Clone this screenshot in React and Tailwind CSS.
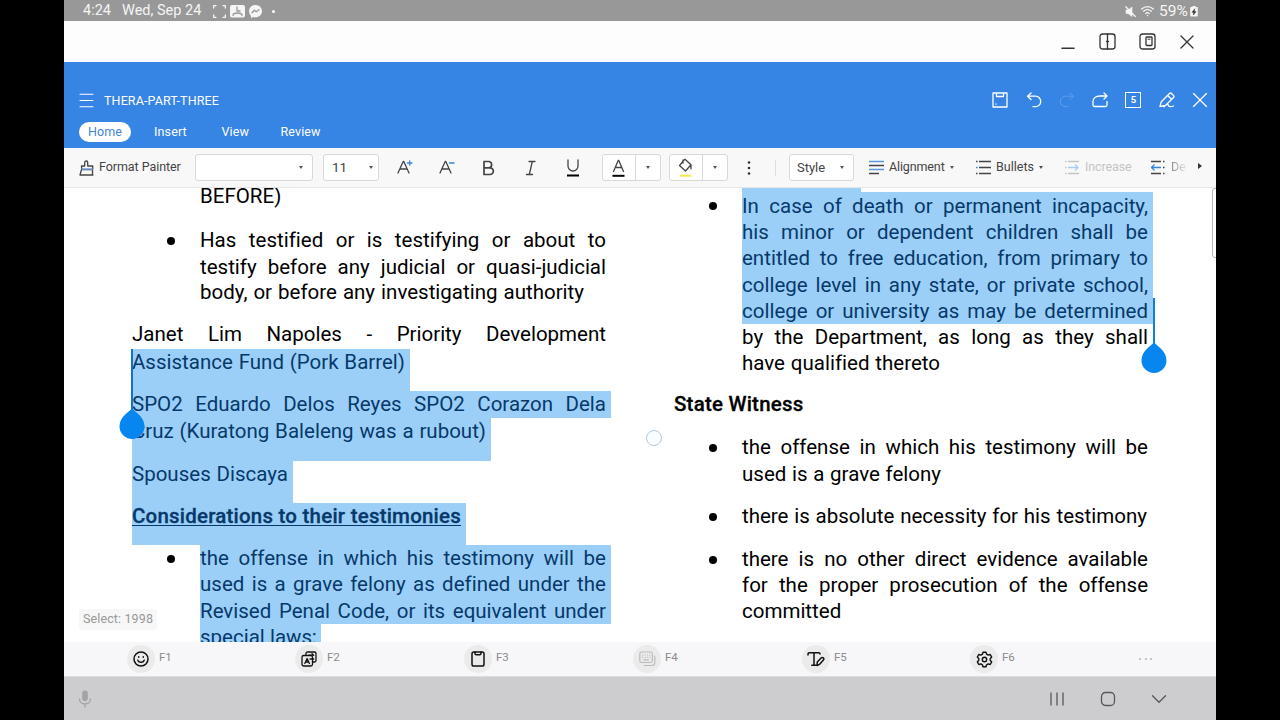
import clsx from "clsx";

const leftLines = [
  { text: "BEFORE)", indent: true, h: "h-11", w: "w-[82px]" },
  { text: "Has testified or is testifying or about to", indent: true, bullet: true, h: "h-[27px]", w: "w-[406px]" },
  { text: "testify before any judicial or quasi-judicial", indent: true, h: "h-[25px]", w: "w-[406px]" },
  { text: "body, or before any investigating authority", indent: true, h: "h-[42px]", w: "w-[384px]" },
  { text: "Janet Lim Napoles - Priority Development", h: "h-[28px]", w: "w-[474px]" },
  { text: "Assistance Fund (Pork Barrel)", h: "h-[42px]", w: "w-[273px]", mark: true },
  { text: "SPO2 Eduardo Delos Reyes SPO2 Corazon Dela", h: "h-[27px]", w: "w-[474px]", mark: true },
  { text: "Cruz (Kuratong Baleleng was a rubout)", h: "h-[43px]", w: "w-[354px]", mark: true },
  { text: "Spouses Discaya", h: "h-[42px]", w: "w-[156px]", mark: true },
  { text: "Considerations to their testimonies", h: "h-[42px]", w: "w-[329px]", mark: true, bold: true, underline: true },
  { text: "the offense in which his testimony will be", indent: true, bullet: true, h: "h-[26px]", w: "w-[406px]", mark: true },
  { text: "used is a grave felony as defined under the", indent: true, h: "h-[27px]", w: "w-[406px]", mark: true },
  { text: "Revised Penal Code, or its equivalent under", indent: true, h: "h-[26px]", w: "w-[406px]", mark: true },
  { text: "special laws;", indent: true, h: "h-[42px]", w: "w-[116px]", mark: true },
];

const rightLines = [
  { text: "In case of death or permanent incapacity,", indent: true, bullet: true, h: "h-[27px] pt-px", w: "w-[406px]", mark: true },
  { text: "his minor or dependent children shall be", indent: true, h: "h-[26px]", w: "w-[406px]", mark: true },
  { text: "entitled to free education, from primary to", indent: true, h: "h-[27px]", w: "w-[406px]", mark: true },
  { text: "college level in any state, or private school,", indent: true, h: "h-[26px]", w: "w-[406px]", mark: true },
  { text: "college or university as may be determined", indent: true, h: "h-[26px]", w: "w-[406px]", mark: true },
  { text: "by the Department, as long as they shall", indent: true, h: "h-[26px]", w: "w-[406px]" },
  { text: "have qualified thereto", indent: true, h: "h-[41px]", w: "w-[198px]" },
  { text: "State Witness", h: "h-[43px]", w: "w-[129px]", bold: true },
  { text: "the offense in which his testimony will be", indent: true, bullet: true, h: "h-[27px]", w: "w-[406px]" },
  { text: "used is a grave felony", indent: true, h: "h-[42px]", w: "w-[199px]" },
  { text: "there is absolute necessity for his testimony", indent: true, bullet: true, h: "h-[43px]", w: "w-[405px]" },
  { text: "there is no other direct evidence available", indent: true, bullet: true, h: "h-[26px]", w: "w-[406px]" },
  { text: "for the proper prosecution of the offense", indent: true, h: "h-[26px]", w: "w-[406px]" },
  { text: "committed", indent: true, h: "h-[26px]", w: "w-[100px]" },
];

const Line = ({ line }) => (
  <div className="flex shrink-0">
    {line.indent && (
      <div className="w-[68px] shrink-0 pt-[9.500px] pl-[34.500px]">
        {line.bullet && <div className="size-2 rounded-full bg-black" />}
      </div>
    )}
    <div className={clsx(line.h, "shrink-0", line.mark ? "bg-[#9ccff8] pr-[5px] text-[#06396a]" : "text-black")}>
      <div
        className={clsx(
          line.w,
          "text-[20.5px] leading-[26px] whitespace-nowrap [font-variant-ligatures:none] [text-align-last:justify]",
          line.bold && "font-medium tracking-[0.01em]",
          line.bold && "[-webkit-text-stroke:0.3px_currentColor]",
          line.underline && "underline underline-offset-2 decoration-1"
        )}
      >
        {line.text}
      </div>
    </div>
  </div>
);

const Svg = ({ className, children, ...rest }) => (
  <svg
    className={clsx("shrink-0", className)}
    fill="none"
    stroke="currentColor"
    strokeWidth="1.3"
    strokeLinecap="round"
    strokeLinejoin="round"
    {...rest}
  >
    {children}
  </svg>
);

const Caret = () => <div className="border-x-[2.5px] border-t-[3px] border-x-transparent border-t-[#555]" />;

const StatusBar = () => (
  <div className="flex h-[21px] shrink-0 items-center bg-[#989898] pt-px pl-[19px] text-[14.5px] leading-[20px] text-[#f5f5f5]">
    <span className="w-[39px] whitespace-nowrap">4:24</span>
    <span className="w-[91px] whitespace-nowrap">Wed, Sep 24</span>
    <Svg className="size-[13px]" viewBox="0 0 13 13">
      <path d="M.7 3V.7H3M10 .7h2.3V3M12.3 10v2.3H10M3 12.3H.7V10" />
    </Svg>
    <Svg className="ml-[4px] h-[13px] w-[15px]" viewBox="0 0 15 13" stroke="none">
      <rect width="15" height="12.5" rx="2" fill="#f5f5f5" />
      <path d="M7 2v4h3M3 10.5c0-2 2-2.5 4.500-2.500s4.500.5 4.500 2.500" stroke="#989898" strokeWidth="1.300" />
    </Svg>
    <Svg className="ml-[4px] size-[13px]" viewBox="0 0 13 13" stroke="none">
      <path d="M6.500 0C2.800 0 0 2.700 0 6.200c0 1.900.8 3.500 2 4.600V13l2.200-1.100c.7.2 1.500.3 2.300.3 3.700 0 6.500-2.600 6.500-6S10.200 0 6.500 0z" fill="#f5f5f5" />
      <path d="M3 7.800l2.300-2.500 2 1.500L10 4.800" stroke="#989898" strokeWidth="1.300" />
    </Svg>
    <span className="ml-[10px] size-[3px] rounded-full bg-white" />
    <Svg className="ml-[850px] h-[11px] w-[11px]" viewBox="0 0 11 11">
      <path d="M1 4v3.500h2L7 10.500V1L3.500 4z" fill="#f5f5f5" strokeWidth=".6" />
      <path d="M.8.8l9.500 9.700" />
    </Svg>
    <Svg className="ml-[5px] h-3 w-[13px]" viewBox="0 0 13 12">
      <path d="M.7 4C4 .8 9 .8 12.300 4M2.700 6.300c2-2.200 5.400-2.200 7.600 0M4.800 8.500c1-1 2.300-1 3.300 0M6.500 10.500v.2" />
    </Svg>
    <span className="ml-[5px] w-[30px] text-[15.500px] whitespace-nowrap">59%</span>
    <Svg className="ml-[1px] h-[11px] w-[8px]" viewBox="0 0 8 11" stroke="none">
      <path d="M2.500 0h3v1H7q.8 0 .8.8v8q0 .8-.8.8H1q-.8 0-.8-.8v-8Q.2 1 1 1h1.500z" fill="#f5f5f5" />
      <path d="M4.600 3L2 6.300h1.700L3.400 9 6 5.600H4.300z" fill="#333" stroke="#333" strokeWidth=".5" />
    </Svg>
  </div>
);

const WindowBar = () => (
  <div className="flex h-[41px] shrink-0 items-center justify-end gap-[23px] bg-[#fdfdfd] pr-[21px] text-[#333]">
    <Svg className="size-4" viewBox="0 0 16 16" strokeWidth="1.500">
      <path d="M2 14.300h12" />
    </Svg>
    <Svg className="size-[17px]" viewBox="0 0 17 17">
      <rect x="1" y="1" width="15" height="15" rx="2.500" />
      <path d="M8.500 1v15M7.500 8.500h2" />
    </Svg>
    <Svg className="size-[17px]" viewBox="0 0 17 17">
      <rect x="1" y="1" width="15" height="15" rx="2.500" />
      <rect x="7" y="4" width="6" height="8.500" rx=".8" />
      <path d="M9 6.200h2" strokeWidth="1" />
    </Svg>
    <Svg className="size-4" viewBox="0 0 16 16">
      <path d="M2 2l12 12M14 2L2 14" />
    </Svg>
  </div>
);

const AppHeader = () => (
  <div className="flex h-[86px] shrink-0 flex-col bg-[#3684e4] pt-[27px] text-white">
    <div className="flex h-6 items-center pl-[15px]">
      <Svg className="mb-[2px] h-[15px] w-[15px]" viewBox="0 0 15 15">
        <path d="M1 1.200h13M1 7.500h13M1 13.800h13" strokeWidth="1.100" />
      </Svg>
      <span className="ml-[10px] text-[12.500px] tracking-[0.01em]">THERA-PART-THREE</span>
      <div className="ml-auto flex items-center gap-[17.300px] pr-[8px] pb-[3px]">
        <Svg className="size-4" viewBox="0 0 16 16">
          <path d="M1 1h14v14H1zM4.500 1v3.500h7V1M4 11.800v.4" />
        </Svg>
        <Svg className="size-4" viewBox="0 0 16 16">
          <path d="M5 1L1.500 4.200 5 7.500M2 4.200h7.500a5.200 5.200 0 0 1 0 10.500H7" />
        </Svg>
        <Svg className="size-4 text-[#629fea]" viewBox="0 0 16 16" strokeWidth="1">
          <path d="M11 1l3.500 3.200L11 7.500M14 4.200H6.500a5.200 5.200 0 0 0 0 10.500H9" />
        </Svg>
        <Svg className="size-4" viewBox="0 0 16 16">
          <path d="M12 1l3 3-3 3M14.500 4H8C4 4 1 6 1 9.500V13q0 1.500 1.500 1.500h11q1.500 0 1.500-1.500V9.500" />
        </Svg>
        <div className="flex size-4 items-center justify-center border-[1.300px] border-white text-[9.500px] leading-none font-bold">
          5
        </div>
        <Svg className="size-4" viewBox="0 0 16 16">
          <path d="M1 14.500l1.300-4.800L10.500 1.500q1-1 2 0l2 2q1 1 0 2L6.500 13.500zM8.700 3.500l3.800 3.800M5 14.800c2.500-3.500 4-2.800 4.500-1.300s2.500 1.500 5 .5" />
        </Svg>
        <Svg className="size-4" viewBox="0 0 16 16">
          <path d="M1.500 1.500l13 13M14.500 1.500l-13 13" />
        </Svg>
      </div>
    </div>
    <div className="mt-[9px] flex h-5 items-center pl-[15px] text-[12.500px] tracking-[0.01em]">
      <div className="flex h-5 w-[52px] items-center justify-center rounded-full bg-white text-[#3f86d8]">Home</div>
      <span className="ml-[23px] w-[67.500px]">Insert</span>
      <span className="w-[59px]">View</span>
      <span>Review</span>
    </div>
  </div>
);

const Split = ({ children }) => (
  <div className="flex h-[27px] w-[59px] shrink-0 rounded-[3px] border border-[#d8d8d8] bg-white">
    <div className="flex w-[33px] flex-col items-center justify-center border-r border-[#d8d8d8]">{children}</div>
    <div className="flex flex-1 items-center justify-center">
      <Caret />
    </div>
  </div>
);

const LetterA = () => <path d="M1 13L6.200 1.500h.6L12 13M3 9h7" />;

const ListIcon = ({ className, arrow }) => (
  <Svg className={clsx("h-[15px] w-[16px]", className)} viewBox="0 0 16 15" strokeLinecap="butt">
    {!arrow && <path d="M4 1.500h12M4 7.500h12M4 13.500h12" />}
    {!arrow && <path d="M1 1.500h1.500M1 13.500h1.500" />}
    {!arrow && <path d="M1 7.500h1.500" stroke="#3684e4" />}
    {arrow === "right" && <path d="M1 1.500h1.500M4 1.500h11M1 13.500h1.500M4 13.500h11M1 7.500h1.500" />}
    {arrow === "right" && <path d="M4 7.500h10M11 4.500l3 3-3 3" stroke="#a9ccf3" />}
    {arrow === "left" && <path d="M1 1.500h10M13 1.500h1.500M1 13.500h10M13 13.500h1.500M13 7.500h1.500" />}
    {arrow === "left" && <path d="M11 7.500H1.500M4.500 4.500l-3 3 3 3" stroke="#3684e4" />}
  </Svg>
);

const Toolbar = () => (
  <div className="flex h-[40px] shrink-0 items-center border-b border-[#e6e6e6] bg-[#f8f8f8] pl-[15px] text-[12.500px] whitespace-nowrap text-[#444]">
    <Svg className="h-[16px] w-[15px]" viewBox="0 0 15 16">
      <path d="M2.500 6h3.200V2.500q0-1.500 1.500-1.500t1.500 1.500V6h5v3.500h-11zM2.500 9.500L1 15h12.500V9.500M13.500 15h.5" />
      <path d="M3 9.200h10.500" stroke="#6aa3e8" />
    </Svg>
    <span className="ml-[5px] w-[96px] tracking-[-0.005em]">Format Painter</span>
    <div className="flex h-[27px] w-[118px] items-center justify-end rounded-[3px] border border-[#d8d8d8] bg-white pr-[9px]">
      <Caret />
    </div>
    <div className="ml-[10px] flex h-[27px] w-[56px] items-center justify-between rounded-[3px] border border-[#d8d8d8] bg-white pr-[5px] pl-[8px] text-[13.500px]">
      11
      <Caret />
    </div>
    <Svg className="ml-[18px] h-[15px] w-[18px]" viewBox="0 0 18 15">
      <LetterA />
      <path d="M10.500 3h4.500M12.700.8v4.400" stroke="#3684e4" />
    </Svg>
    <Svg className="ml-[24px] h-[15px] w-[18px]" viewBox="0 0 18 15">
      <LetterA />
      <path d="M10.500 3h4.500" stroke="#3684e4" />
    </Svg>
    <Svg className="ml-[25px] h-[16px] w-[14px]" viewBox="0 0 14 16" strokeWidth="1.700">
      <path d="M2 1.500h5a3.200 3.200 0 0 1 0 6.300H2zM2 7.800h6a3.300 3.300 0 0 1 0 6.700H2z" />
    </Svg>
    <Svg className="ml-[29px] h-[16px] w-[12px]" viewBox="0 0 12 16">
      <path d="M4 1.500h6M1.500 14.500h6M7.300 1.500l-3 13" />
    </Svg>
    <Svg className="ml-[29px] h-[18px] w-[14px]" viewBox="0 0 14 18">
      <path d="M2 1v6a5 5 0 0 0 10 0V1" />
      <path d="M1 16.500h12" stroke="#000" strokeWidth="2" strokeLinecap="butt" />
    </Svg>
    <div className="ml-[22px]">
      <Split>
        <Svg className="mr-[2px] h-[18px] w-[13px]" viewBox="0 0 13 18">
          <path d="M1.500 12.500L6.200 1.500h.6l4.700 11M3.300 8.500h6.400" />
          <path d="M.5 16.800h12" stroke="#000" strokeWidth="2" strokeLinecap="butt" />
        </Svg>
      </Split>
    </div>
    <div className="ml-[8px]">
      <Split>
        <Svg className="mr-[2px] h-[19px] w-[15px]" viewBox="0 0 15 19">
          <path d="M4.500 3.500L7 1.200l6 5.600-5.500 6.200L1.500 7.500 4.500 4M5 2v3M13 6.800v4" />
          <path d="M2 17.700h11.500" stroke="#f0ea50" strokeWidth="2" strokeLinecap="butt" />
        </Svg>
      </Split>
    </div>
    <Svg className="ml-[19px] h-[16px] w-[4px]" viewBox="0 0 4 16" stroke="none">
      <circle cx="2" cy="2.500" r="1.300" fill="#333" />
      <circle cx="2" cy="8" r="1.300" fill="#333" />
      <circle cx="2" cy="13.500" r="1.300" fill="#333" />
    </Svg>
    <div className="ml-[24px] h-4 w-px bg-[#dcdcdc]" />
    <div className="ml-[13px] flex h-[27px] w-[65px] items-center justify-between rounded-[3px] border border-[#d8d8d8] bg-white pr-[9px] pl-[7px]">
      <span className="text-[13px]">Style</span>
      <Caret />
    </div>
    <Svg className="ml-[15px] h-[15px] w-[15px]" viewBox="0 0 15 15" strokeLinecap="butt">
      <path d="M0 1.500h15M0 9.500h15" stroke="#5b98de" />
      <path d="M0 5.500h15M0 13.500h10" />
    </Svg>
    <span className="ml-[5px] w-[61px] tracking-[-0.01em]">Alignment</span>
    <Caret />
    <ListIcon className="ml-[21px]" />
    <span className="ml-[5px] w-[43px]">Bullets</span>
    <Caret />
    <ListIcon className="ml-[21px] text-[#c4c4c4]" arrow="right" />
    <span className="ml-[5px] w-[65px] tracking-[-0.01em] text-[#c4c4c4]">Increase</span>
    <ListIcon className="text-[#444]" arrow="left" />
    <span className="ml-[5px] w-[27px] bg-gradient-to-r from-[#888] to-[#eee] to-60% bg-clip-text text-transparent">De</span>
    <div className="mb-[3px] border-y-[3px] border-l-[4px] border-y-transparent border-l-[#333]" />
  </div>
);

const Document = () => (
  <div className="relative flex h-[454px] shrink-0 overflow-hidden bg-white">
    <div className="-mt-[5px] ml-[68px] flex w-[542px] flex-col">
      {leftLines.map((line) => (
        <Line key={line.text} line={line} />
      ))}
    </div>
    <div className="flex w-[500px] flex-col">
      <div className="ml-[68px] h-1 w-[119px] shrink-0 bg-[#9ccff8]" />
      {rightLines.map((line) => (
        <Line key={line.text} line={line} />
      ))}
    </div>

    {/* selection start and end handles */}
    <div className="absolute top-[161px] left-[67px] h-[68px] w-[2px] bg-[#1273c4]" />
    <svg className="absolute top-[220px] left-[55px] h-[31px] w-[26px]" viewBox="0 0 26 31">
      <path d="M13 0C15 4 25.500 8 25.500 18.500a12.500 12.500 0 0 1-25 0C.5 8 11 4 13 0z" fill="#0686ee" />
    </svg>
    <div className="absolute top-[110px] left-[1089px] h-[48px] w-[2px] bg-[#0f7fdc]" />
    <svg className="absolute top-[154px] left-[1077px] h-[31px] w-[26px]" viewBox="0 0 26 31">
      <path d="M13 0C15 4 25.500 8 25.500 18.500a12.500 12.500 0 0 1-25 0C.5 8 11 4 13 0z" fill="#0686ee" />
    </svg>

    <div className="absolute top-[242px] left-[582px] size-4 rounded-full border border-[#b3c6dc] bg-[#fafdff]" />
    <div className="absolute top-[421px] left-[15px] flex h-[21px] w-[78px] items-center justify-center rounded-[2px] bg-[#f7f7f7] text-[12.500px] tracking-[0.01em] whitespace-nowrap text-[#999]">
      Select: 1998
    </div>
    <div className="absolute top-0 -right-[3px] h-[70px] w-[7px] rounded-[3px] border border-[#b5b5b5] bg-white" />
  </div>
);

const FKey = ({ label, className, children }) => (
  <div className={clsx("flex shrink-0 items-center", className)}>
    <div className="flex size-7 items-center justify-center rounded-full bg-[#ebebec]">{children}</div>
    <span className="mb-[3px] ml-[4px] text-[11.500px] text-[#8b8b8b]">{label}</span>
  </div>
);

const KeyRow = () => (
  <div className="flex h-[35px] shrink-0 items-center border-b border-[#dcdcde] bg-[#f7f7f9] pl-[63px] text-[#111]">
    <FKey label="F1" className="w-[168px]">
      <Svg className="size-4" viewBox="0 0 16 16" strokeWidth="1.500">
        <circle cx="8" cy="8" r="7" />
        <path d="M4.800 9.300c1 2.700 5.400 2.700 6.400 0M5.700 5.800v.4M10.300 5.800v.4" />
      </Svg>
    </FKey>
    <FKey label="F2" className="w-[169px]">
      <Svg className="size-4" viewBox="0 0 16 16">
        <rect x="1" y="4.500" width="10.500" height="10.500" rx="1.800" />
        <path d="M5 4.300V2.500Q5 1 6.500 1h7Q15 1 15 2.500v7q0 1.500-1.500 1.500h-2M8 4.200h4.500M11 2.600l1.700 1.600M12.700 8H9" />
        <path d="M3.800 12.500l2.300-5 2.300 5M4.700 11h2.800" />
      </Svg>
    </FKey>
    <FKey label="F3" className="w-[169px]">
      <Svg className="size-4" viewBox="0 0 16 16" strokeWidth="1.500">
        <rect x="2" y="1" width="12" height="14" rx="1.800" />
        <path d="M5 1v1.500q0 1.200 1.200 1.200h3.600q1.200 0 1.200-1.200V1" />
      </Svg>
    </FKey>
    <FKey label="F4" className="w-[169px]">
      <Svg className="h-4 w-[17px] text-[#bcbcbc]" viewBox="0 0 17 16" strokeWidth="1.200">
        <rect x=".8" y="1" width="12.500" height="10.500" rx="1.800" />
        <path d="M15.800 5v6.500q0 3-3 3H5" />
        <path d="M3.500 4h.2M6 4h.2M8.500 4h.2M10.800 4h.2M3.500 6.300h.2M6 6.300h.2M8.500 6.300h.2M10.800 6.300h.2M5 8.900h4.500" />
      </Svg>
    </FKey>
    <FKey label="F5" className="w-[168px]">
      <Svg className="h-4 w-[18px]" viewBox="0 0 18 16" strokeWidth="1.500">
        <path d="M1 4V3q0-1.200 1.200-1.200h9.600Q13 1.800 13 3M7 2v12.200M4.800 14.200h4.500" />
        <path d="M10 14.500l.3-3.500 4-4.200q1-.8 2 .1t.1 2l-4 4.500z" />
      </Svg>
    </FKey>
    <FKey label="F6" className="w-[169px]">
      <Svg className="size-[17px]" viewBox="0 0 17 17" strokeWidth="1.400">
        <path d="M7 1.200h3l.6 2 1.500.9 2.100-.6 1.500 2.600L14.200 7.700v1.600l1.500 1.600-1.500 2.600-2.100-.6-1.500.9-.6 2H7l-.6-2-1.500-.9-2.100.6-1.500-2.600 1.500-1.600V7.700L1.300 6.100l1.500-2.600 2.100.6 1.500-.9z" />
        <circle cx="8.500" cy="8.500" r="2.200" />
      </Svg>
    </FKey>
    <div className="flex gap-[3.500px]">
      <span className="size-[2px] rounded-full bg-[#b5b5b5]" />
      <span className="size-[2px] rounded-full bg-[#b5b5b5]" />
      <span className="size-[2px] rounded-full bg-[#b5b5b5]" />
    </div>
  </div>
);

const NavBar = () => (
  <div className="flex h-[43px] items-center bg-[#cdcdcf] pl-[14px] text-[#58585a]">
    <Svg className="h-[18px] w-[14px] text-[#a3a3a5]" viewBox="0 0 14 18">
      <rect x="4.200" y=".5" width="5.600" height="10.500" rx="2.800" fill="currentColor" stroke="none" />
      <path d="M1.500 9c0 6.500 11 6.500 11 0M7 14v3" />
    </Svg>
    <Svg className="ml-[957px] h-[14px] w-[16px]" viewBox="0 0 16 14" strokeLinecap="butt">
      <path d="M2 .5v13M8 .5v13M14 .5v13" />
    </Svg>
    <Svg className="ml-[35px] size-4" viewBox="0 0 16 16">
      <rect x="1.500" y="1.500" width="13" height="13" rx="4" />
    </Svg>
    <Svg className="ml-[35px] size-4" viewBox="0 0 16 16">
      <path d="M1.500 4.800L8 11.300l6.500-6.500" />
    </Svg>
  </div>
);

const App = () => {
  return (
    <div className="flex h-[720px] w-[1280px] justify-center overflow-hidden bg-black font-['Roboto',sans-serif]">
      <div className="flex w-[1152px] flex-col overflow-hidden">
        <StatusBar />
        <WindowBar />
        <AppHeader />
        <Toolbar />
        <Document />
        <KeyRow />
        <NavBar />
      </div>
    </div>
  );
};

export default App;
